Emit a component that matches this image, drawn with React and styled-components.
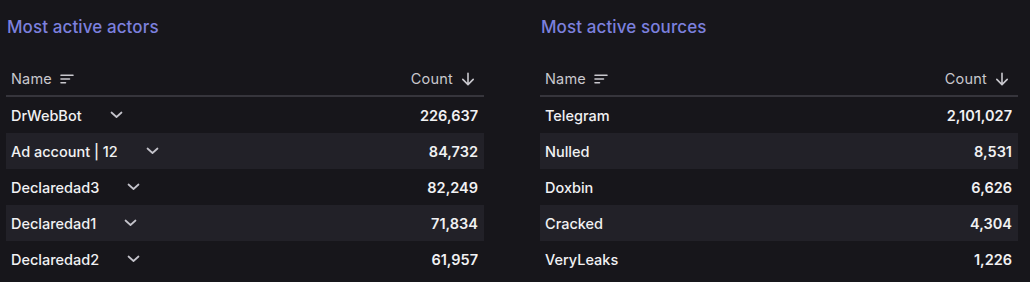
import styled, { createGlobalStyle } from "styled-components";

const GlobalStyle = createGlobalStyle`
  html, body {
    margin: 0;
    padding: 0;
    background: #17161b;
  }
  body {
    font-family: Inter, "Noto Sans", sans-serif;
    -webkit-font-smoothing: antialiased;
  }
`;

const Page = styled.div`
  display: grid;
  grid-template-columns: 478px 478px;
  column-gap: 56px;
  padding: 14px 12px 0 6px;
  height: 282px;
  box-sizing: border-box;
  background: #17161b;
`;

const Panel = styled.section`
  display: flex;
  flex-direction: column;
`;

const Title = styled.h2`
  margin: 0 0 0 1px;
  height: 26px;
  line-height: 26px;
  font-size: 17px;
  font-weight: 500;
  color: #7c80de;
  letter-spacing: 0.1px;
`;

const Table = styled.div`
  margin-top: 23px;
  display: flex;
  flex-direction: column;
`;

const HeaderRow = styled.div`
  display: flex;
  align-items: center;
  justify-content: space-between;
  height: 31px;
  padding: 0 9px 1px 5px;
  border-bottom: 2px solid #36353c;
  color: #c9c8ce;
  font-size: 14.5px;
  letter-spacing: 0.2px;
`;

const HeadCell = styled.div`
  display: flex;
  align-items: center;
  gap: 8px;
`;

const Row = styled.div`
  display: flex;
  align-items: center;
  justify-content: space-between;
  height: 36px;
  padding: 0 6px 0 5px;
  background: ${(p) => (p.$striped ? "#222128" : "transparent")};
  color: #f1f1f3;
  font-size: 14.5px;
`;

const NameCell = styled.div`
  display: flex;
  align-items: center;
  gap: 28px;
  font-weight: 500;
`;

const Count = styled.div`
  font-weight: 600;
`;

const Chevron = () => (
  <svg width="13" height="8" viewBox="0 0 13 8" fill="none">
    <path d="M1.5 1.5L6.5 6L11.5 1.5" stroke="#c4c3cb" strokeWidth="1.7" strokeLinecap="round" strokeLinejoin="round" />
  </svg>
);

const SortIcon = () => (
  <svg width="14" height="10" viewBox="0 0 14 10" fill="none">
    <path d="M1 1.2H13M1 5H9.5M1 8.8H5.5" stroke="#c9c8ce" strokeWidth="1.6" strokeLinecap="round" />
  </svg>
);

const ArrowDown = () => (
  <svg width="14" height="14" viewBox="0 0 14 14" fill="none">
    <path d="M7 1.2V12.4M1.8 7.4L7 12.6L12.2 7.4" stroke="#c9c8ce" strokeWidth="1.6" strokeLinecap="round" strokeLinejoin="round" />
  </svg>
);

const actors = [
  ["DrWebBot", "226,637"],
  ["Ad account | 12", "84,732"],
  ["Declaredad3", "82,249"],
  ["Declaredad1", "71,834"],
  ["Declaredad2", "61,957"],
];

const sources = [
  ["Telegram", "2,101,027"],
  ["Nulled", "8,531"],
  ["Doxbin", "6,626"],
  ["Cracked", "4,304"],
  ["VeryLeaks", "1,226"],
];

function StatTable({ title, rows, expandable }) {
  return (
    <Panel>
      <Title>{title}</Title>
      <Table>
        <HeaderRow>
          <HeadCell>
            Name <SortIcon />
          </HeadCell>
          <HeadCell>
            Count <ArrowDown />
          </HeadCell>
        </HeaderRow>
        {rows.map(([name, count], i) => (
          <Row key={name} $striped={i % 2 === 1}>
            <NameCell>
              {name}
              {expandable && <Chevron />}
            </NameCell>
            <Count>{count}</Count>
          </Row>
        ))}
      </Table>
    </Panel>
  );
}

export default function App() {
  return (
    <>
      <GlobalStyle />
      <Page>
        <StatTable title="Most active actors" rows={actors} expandable />
        <StatTable title="Most active sources" rows={sources} />
      </Page>
    </>
  );
}
